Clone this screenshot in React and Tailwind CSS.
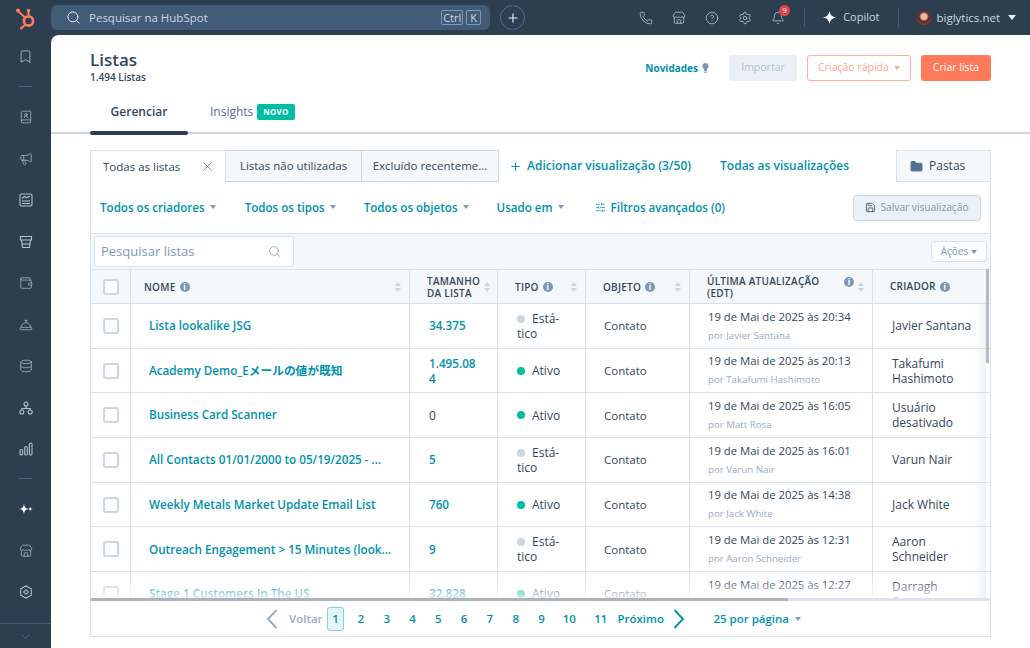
import { Bookmark, BookUser, ChevronDown, ConciergeBell, Database, Folder, Megaphone, Phone, Plus, Save, Search, Settings, SlidersHorizontal, Store, Wallet, X, Bell, CircleHelp } from 'lucide-react';

const rows = [
  { name: 'Lista lookalike JSG', size: '34.375', link: true, type: 'static', date: '19 de Mai de 2025 às 20:34', by: 'por Javier Santana', creator: 'Javier Santana' },
  { name: 'Academy Demo_Eメールの値が既知', size: '1.495.08 4', link: true, type: 'active', date: '19 de Mai de 2025 às 20:13', by: 'por Takafumi Hashimoto', creator: 'Takafumi Hashimoto' },
  { name: 'Business Card Scanner', size: '0', link: false, type: 'active', date: '19 de Mai de 2025 às 16:05', by: 'por Matt Rosa', creator: 'Usuário desativado' },
  { name: 'All Contacts 01/01/2000 to 05/19/2025 - ...', size: '5', link: true, type: 'static', date: '19 de Mai de 2025 às 16:01', by: 'por Varun Nair', creator: 'Varun Nair' },
  { name: 'Weekly Metals Market Update Email List', size: '760', link: true, type: 'active', date: '19 de Mai de 2025 às 14:38', by: 'por Jack White', creator: 'Jack White' },
  { name: 'Outreach Engagement > 15 Minutes (look...', size: '9', link: true, type: 'static', date: '19 de Mai de 2025 às 12:31', by: 'por Aaron Schneider', creator: 'Aaron Schneider' },
  { name: 'Stage 1 Customers In The US', size: '32.828', link: true, type: 'active', date: '19 de Mai de 2025 às 12:27', by: 'por Darragh Curran', creator: 'Darragh Curran' },
];

const pages = ['2', '3', '4', '5', '6', '7', '8', '9', '10', '11'];

function Caret({ className = '' }) {
  return <span className={`inline-block w-0 h-0 border-x-[3.5px] border-x-transparent border-t-[4px] border-t-current ${className}`} />;
}

function SortArrows() {
  return (
    <span className="flex flex-col gap-[2px] shrink-0">
      <span className="w-0 h-0 border-x-[3.5px] border-x-transparent border-b-[4px] border-b-[#cbd6e2]" />
      <span className="w-0 h-0 border-x-[3.5px] border-x-transparent border-t-[4px] border-t-[#cbd6e2]" />
    </span>
  );
}

function InfoDot() {
  return <span className="inline-flex w-[10px] h-[10px] rounded-full bg-[#7c98b6] text-white text-[8px] font-bold items-center justify-center leading-none shrink-0">i</span>;
}

function HubLogo() {
  return (
    <svg width="22" height="24" viewBox="0 0 22 24" fill="none" stroke="#ff7a59">
      <circle cx="13.5" cy="15" r="4.6" strokeWidth="2.6" />
      <path d="M13.5 10V5.5" strokeWidth="2" />
      <circle cx="13.5" cy="4.5" r="1.7" fill="#ff7a59" stroke="none" />
      <path d="M10 11.5 3.5 5.5" strokeWidth="2" />
      <circle cx="3" cy="4.5" r="2" fill="#ff7a59" stroke="none" />
      <path d="M10.2 18.6 7 21.8" strokeWidth="2" />
      <circle cx="6.4" cy="22" r="1.5" fill="#ff7a59" stroke="none" />
    </svg>
  );
}

function ContentIcon() {
  return (
    <svg width="14" height="14" viewBox="0 0 14 14" fill="none" stroke="#b0c1d4" strokeWidth="1.1">
      <rect x="1" y="1" width="12" height="12" rx="1.5" />
      <path d="M3 5.5 5.5 3.5 7.5 4.8 11 3" />
      <path d="M3 8h8M3 10.5h8" />
    </svg>
  );
}

function CommerceIcon() {
  return (
    <svg width="14" height="14" viewBox="0 0 14 14" fill="none" stroke="#b0c1d4" strokeWidth="1.1">
      <path d="M1.5 1.5h11v3.5h-11z" />
      <path d="M2.5 5 3.5 12.5h7L11.5 5" />
      <path d="M3 9h8" />
    </svg>
  );
}

function OrgIcon() {
  return (
    <svg width="14" height="14" viewBox="0 0 14 14" fill="none" stroke="#b0c1d4" strokeWidth="1.1">
      <circle cx="7" cy="3" r="2" />
      <circle cx="2.8" cy="11" r="2" />
      <circle cx="11.2" cy="11" r="2" />
      <path d="M7 5v2.5M2.8 9V7.5h8.4V9" />
    </svg>
  );
}

function BarsIcon() {
  return (
    <svg width="14" height="14" viewBox="0 0 14 14" fill="none" stroke="#b0c1d4" strokeWidth="1.1">
      <rect x="1" y="7.5" width="2.6" height="5.5" rx="1.3" />
      <rect x="5.7" y="4.5" width="2.6" height="8.5" rx="1.3" />
      <rect x="10.4" y="1" width="2.6" height="12" rx="1.3" />
    </svg>
  );
}

function HexIcon() {
  return (
    <svg width="14" height="14" viewBox="0 0 14 15" fill="none" stroke="#b0c1d4" strokeWidth="1.1">
      <path d="M7 1 12.6 4.2v6.6L7 14 1.4 10.8V4.2z" />
      <path d="M7 5 9.5 7.5 7 10 4.5 7.5z" />
    </svg>
  );
}

function Sparkle({ size = 12 }) {
  return (
    <svg width={size} height={size} viewBox="0 0 12 12" fill="#fff">
      <path d="M6 0C6.5 3.6 8.4 5.5 12 6 8.4 6.5 6.5 8.4 6 12 5.5 8.4 3.6 6.5 0 6 3.6 5.5 5.5 3.6 6 0Z" />
    </svg>
  );
}

function BreezeIcon() {
  return (
    <svg width="14" height="14" viewBox="0 0 14 14" fill="#fff">
      <path d="M5 1C5.4 5 6 6.5 10 7 6 7.5 5.4 9 5 13 4.6 9 4 7.5 0 7 4 6.5 4.6 5 5 1Z" />
      <path d="M11.2 4.8C11.4 6 12 6.7 14 7 12 7.3 11.4 8 11.2 9.2 11 8 10.4 7.3 9 7 10.4 6.7 11 6 11.2 4.8Z" />
    </svg>
  );
}

function Chevron({ dir, className }) {
  return (
    <svg width="12" height="20" viewBox="0 0 12 20" fill="none" stroke="currentColor" strokeWidth="1.9" className={className}>
      <path d={dir === 'left' ? 'M10.5 1 2 10l8.5 9' : 'M1.5 1 10 10l-8.5 9'} />
    </svg>
  );
}

function Sidebar() {
  const cls = 'text-[#b0c1d4]';
  return (
    <aside className="w-[51px] shrink-0 flex flex-col items-center relative">
      <Bookmark size={15} strokeWidth={1.3} className={`${cls} mt-[14px]`} />
      <div className="w-[13px] h-px bg-[#4f6a87] mt-[22px]" />
      <div className="flex flex-col items-center gap-[27.5px] mt-[23px]">
        <BookUser size={14} strokeWidth={1.2} className={cls} />
        <Megaphone size={14} strokeWidth={1.2} className={cls} />
        <ContentIcon />
        <CommerceIcon />
        <Wallet size={14} strokeWidth={1.2} className={cls} />
        <ConciergeBell size={14} strokeWidth={1.2} className={cls} />
        <Database size={14} strokeWidth={1.2} className={cls} />
        <OrgIcon />
        <BarsIcon />
      </div>
      <div className="w-[13px] h-px bg-[#4f6a87] mt-[22px]" />
      <div className="flex flex-col items-center gap-[27.5px] mt-[23px]">
        <BreezeIcon />
        <Store size={14} strokeWidth={1.2} className={cls} />
        <HexIcon />
      </div>
      <div className="absolute left-0 right-0 top-[588px] h-[25px] border-t border-[#425b76] flex items-center justify-center">
        <ChevronDown size={15} strokeWidth={1.4} className="text-[#516f90]" />
      </div>
    </aside>
  );
}

function TopBar() {
  return (
    <header className="h-[35px] bg-[#2d3e50] flex items-center shrink-0 relative">
      <div className="w-[51px] flex justify-center"><HubLogo /></div>
      <div className="w-[439px] h-[25px] rounded-md bg-[#425b76] flex items-center pl-[15px] pr-[9px] text-[#cbd6e2]">
        <Search size={15} strokeWidth={1.6} className="text-[#eaf0f6]" />
        <span className="ml-[8px] text-[11.5px]">Pesquisar na HubSpot</span>
        <span className="ml-auto flex gap-[3px] text-[11px] leading-none">
          <span className="border border-[#7c98b6] rounded-[2px] px-[1px] py-px">Ctrl</span>
          <span className="border border-[#7c98b6] rounded-[2px] px-[3px] py-px">K</span>
        </span>
      </div>
      <div className="ml-[10px] w-[25px] h-[25px] rounded-full border border-[#516f90] flex items-center justify-center text-[#eaf0f6]">
        <Plus size={14} />
      </div>
      <div className="ml-auto flex items-center text-[#cbd6e2]">
        <div className="flex items-center gap-[19px] mr-[19px]">
          <Phone size={14} strokeWidth={1.2} />
          <Store size={14} strokeWidth={1.2} />
          <CircleHelp size={14} strokeWidth={1.2} />
          <Settings size={14} strokeWidth={1.2} />
          <div className="relative">
            <Bell size={14} strokeWidth={1.2} />
            <span className="absolute -top-[6px] -right-[5px] w-[11px] h-[11px] rounded-full bg-[#e0434b] text-white text-[8px] flex items-center justify-center">9</span>
          </div>
        </div>
        <div className="w-px h-[19px] bg-[#425b76]" />
        <div className="flex items-center gap-[7px] pl-[18px] pr-[18px] text-[11px]"><Sparkle size={13} /><span>Copilot</span></div>
        <div className="w-px h-[19px] bg-[#425b76]" />
        <div className="flex items-center pl-[18px] pr-[14px] text-[11.5px]">
          <span className="w-[14px] h-[14px] rounded-full bg-[radial-gradient(circle_at_50%_40%,#f0b9a0_0_25%,#5a2a20_45%,#c0492f_100%)] mr-[6px]" />
          <span>biglytics.net</span>
          <Caret className="ml-[8px] text-[#eaf0f6] border-x-[4px] border-t-[5px]" />
        </div>
      </div>
    </header>
  );
}

function Row({ r }) {
  return (
    <div className="flex h-[44.7px] border-b border-[#d9e2ec] text-[12px] text-[#33475b]">
      <div className="w-[40px] border-r border-[#d9e2ec] flex items-center justify-center">
        <span className="w-[16px] h-[16px] rounded-[3px] border-2 border-[#cbd6e2] bg-white" />
      </div>
      <div className="w-[279px] border-r border-[#d9e2ec] flex items-center pl-[18px] text-[11.7px] font-semibold text-[#0091ae] whitespace-nowrap">{r.name}</div>
      <div className={`w-[88px] border-r border-[#d9e2ec] flex items-center pl-[19px] pr-[6px] leading-[15px] ${r.link ? 'text-[11.7px] font-semibold text-[#0091ae]' : ''}`}>
        <span className="max-w-[52px]">{r.size}</span>
      </div>
      <div className="w-[88px] border-r border-[#d9e2ec] flex items-center pl-[19px] leading-[15px]">
        {r.type === 'active' ? (
          <span className="flex items-center gap-[7px]"><span className="w-[8px] h-[8px] rounded-full bg-[#00bda5]" />Ativo</span>
        ) : (
          <span><span className="inline-block w-[8px] h-[8px] rounded-full bg-[#cbd6e2] mr-[7px]" />Está-<br />tico</span>
        )}
      </div>
      <div className="w-[104px] border-r border-[#d9e2ec] flex items-center pl-[18px] text-[11.5px]">Contato</div>
      <div className="w-[183px] border-r border-[#d9e2ec] flex flex-col justify-center pl-[18px] gap-[3px]">
        <span className="text-[11.3px] whitespace-nowrap">{r.date}</span>
        <span className="text-[9.7px] text-[#99acc2]">{r.by}</span>
      </div>
      <div className="flex-1 flex items-center pl-[19px] leading-[15px]"><span className="max-w-[84px]">{r.creator}</span></div>
    </div>
  );
}

function HeaderCell({ className, children, autoSort = true }) {
  return (
    <div className={`border-r border-[#d9e2ec] flex items-center gap-[4px] pl-[13px] pr-[8px] text-[10px] font-semibold tracking-wide leading-[12px] text-[#33475b] ${className}`}>
      {children}
      <span className={autoSort ? 'ml-auto' : ''}><SortArrows /></span>
    </div>
  );
}

function ListsTable() {
  return (
    <div className="relative h-[332px] overflow-hidden">
      <div className="flex h-[35px] bg-[#f5f8fa] border-y border-[#d9e2ec]">
        <div className="w-[40px] border-r border-[#d9e2ec] flex items-center justify-center">
          <span className="w-[16px] h-[16px] rounded-[3px] border-2 border-[#cbd6e2] bg-white" />
        </div>
        <HeaderCell className="w-[279px]">NOME <InfoDot /></HeaderCell>
        <HeaderCell className="w-[88px] pl-[17px]"><span>TAMANHO<br />DA LISTA</span></HeaderCell>
        <HeaderCell className="w-[88px] pl-[17px]">TIPO <InfoDot /></HeaderCell>
        <HeaderCell className="w-[104px] pl-[17px]">OBJETO <InfoDot /></HeaderCell>
        <HeaderCell className="w-[183px] pl-[17px]" autoSort={false}><span>ÚLTIMA ATUALIZAÇÃO<br />(EDT)</span><span className="ml-auto self-start mt-[5px]"><InfoDot /></span></HeaderCell>
        <div className="flex-1 flex items-center gap-[4px] pl-[17px] text-[10px] font-semibold tracking-wide">CRIADOR <InfoDot /></div>
      </div>
      {rows.map((r) => <Row key={r.name} r={r} />)}
      <div className="absolute left-0 right-0 bottom-[3px] h-[20px] bg-gradient-to-b from-white/0 to-white/80" />
      <div className="absolute right-[4px] top-[35px] bottom-[3px] w-[12px] bg-gradient-to-r from-white/0 to-[#dfe3eb]/50" />
      <div className="absolute right-[1px] top-0 w-[3px] h-[94px] bg-[#b5bcc4]" />
      <div className="absolute left-0 right-0 bottom-0 h-[3px] bg-[#dfe3eb]">
        <div className="w-[697px] h-full bg-[#aeb4ba]" />
      </div>
    </div>
  );
}

export default function App() {
  return (
    <div className="w-[1030px] h-[648px] overflow-hidden bg-[#2d3e50] flex flex-col font-['Open_Sans','Noto_Sans_CJK_JP',sans-serif] text-[#33475b]">
      <TopBar />
      <div className="flex flex-1 min-h-0">
        <Sidebar />
        <main className="flex-1 bg-white rounded-tl-lg min-w-0 flex flex-col">
          <div className="flex items-start pl-[39px] pr-[39px] pt-[15px] h-[63px]">
            <div>
              <h1 className="text-[17px] font-semibold leading-[20px]">Listas</h1>
              <p className="text-[10px] font-semibold leading-[14px]">1.494 Listas</p>
            </div>
            <div className="ml-auto flex items-center mt-[5px]">
              <span className="text-[10px] font-bold text-[#0091ae]">Novidades</span>
              <svg width="7" height="10" viewBox="0 0 7 10" className="ml-[4px]" fill="#7c98b6"><path d="M3.5 0a3.2 3.2 0 0 0-2 5.6L2.3 8h2.4l.8-2.4A3.2 3.2 0 0 0 3.5 0ZM2.5 8.6h2V10h-2z" /></svg>
              <button className="ml-[20px] w-[68px] h-[26px] rounded-[3px] bg-[#eaf0f6] text-[10.5px] text-[#b0c1d4]">Importar</button>
              <button className="ml-[10px] w-[104px] h-[26px] rounded-[3px] border border-[#ff7a59]/60 text-[10.5px] text-[#ffa78f] flex items-center justify-center gap-[5px]">Criação rápida <Caret className="border-x-[2.5px] border-t-[3px]" /></button>
              <button className="ml-[10px] w-[70px] h-[26px] rounded-[3px] bg-[#ff7a59] text-[10.5px] text-white">Criar lista</button>
            </div>
          </div>

          <div className="mx-[39px] h-[34px] pb-[6px] flex items-center relative">
            <div className="w-[98px] flex items-center justify-center text-[12px] font-semibold">Gerenciar</div>
            <div className="ml-[22px] flex items-center text-[12px] text-[#516f90]">
              Insights
              <span className="ml-[4px] h-[16px] px-[6px] rounded-[2px] bg-[#00bda5] text-white text-[8px] font-bold flex items-center tracking-wide">NOVO</span>
            </div>
          </div>
          <div className="h-[2px] bg-[#cbd6e2] relative ml-0">
            <div className="absolute left-[39px] top-[-1px] w-[98px] h-[4px] rounded-sm bg-[#2d3e50]" />
          </div>

          <div className="mx-[39px] mt-[16px] flex flex-col">
            <div className="flex h-[32px] items-stretch relative">
              <div className="w-[136px] bg-white border border-b-0 border-[#d9e2ec] flex items-center justify-between pl-[12px] pr-[10px] text-[11.5px]">
                Todas as listas <X size={15} strokeWidth={1.2} className="text-[#516f90]" />
              </div>
              <div className="w-[136px] bg-[#f5f8fa] border border-l-0 border-[#cbd6e2] flex items-center justify-center text-[11.5px]">Listas não utilizadas</div>
              <div className="w-[137px] bg-[#f5f8fa] border border-l-0 border-[#cbd6e2] flex items-center justify-center text-[11.5px]">Excluído recenteme...</div>
              <div className="flex items-center pl-[10px] text-[12px] font-semibold text-[#0091ae]">
                <Plus size={13} strokeWidth={1.8} className="mr-[5px]" />Adicionar visualização (3/50)
              </div>
              <div className="flex items-center ml-[29px] text-[12px] font-semibold text-[#0091ae]">Todas as visualizações</div>
              <div className="ml-auto w-[95px] bg-[#f5f8fa] border border-[#d9e2ec] flex items-center pl-[13px] gap-[6px] text-[12px]">
                <Folder size={13} fill="#516f90" stroke="#516f90" />Pastas
              </div>
            </div>

            <div className="border-x border-b border-[#d9e2ec] h-[52px] flex items-center pl-[9px] pr-[9px] text-[11.6px] font-semibold text-[#0091ae]">
              <span className="flex items-center gap-[5px]">Todos os criadores <Caret className="text-[#7c98b6]" /></span>
              <span className="flex items-center gap-[5px] ml-[29px]">Todos os tipos <Caret className="text-[#7c98b6]" /></span>
              <span className="flex items-center gap-[5px] ml-[28px]">Todos os objetos <Caret className="text-[#7c98b6]" /></span>
              <span className="flex items-center gap-[5px] ml-[28px]">Usado em <Caret className="text-[#7c98b6]" /></span>
              <span className="flex items-center gap-[5px] ml-[31px]"><SlidersHorizontal size={11} strokeWidth={1.5} />Filtros avançados (0)</span>
              <button className="ml-auto w-[128px] h-[26px] rounded-[3px] bg-[#eaf0f6] border border-[#cbd6e2] flex items-center justify-center gap-[4px] text-[10.2px] font-normal text-[#7c98b6]">
                <Save size={11} className="text-[#425b76]" />Salvar visualização
              </button>
            </div>

            <div className="border-x border-[#d9e2ec] bg-[#f5f8fa] h-[35px] flex items-center pl-[3px] pr-[3px]">
              <div className="w-[200px] h-[31px] bg-white border border-[#d9e2ec] rounded-[3px] flex items-center justify-between pl-[6px] pr-[12px] text-[13px] text-[#7c98b6]">
                Pesquisar listas <Search size={13} strokeWidth={1.4} className="text-[#7c98b6]" />
              </div>
              <button className="ml-auto w-[56px] h-[21px] bg-white border border-[#d9e2ec] rounded-[3px] flex items-center justify-center gap-[3px] text-[10px] text-[#7c98b6]">Ações <Caret className="border-x-[2.5px] border-t-[3px]" /></button>
            </div>

            <div className="border-x border-[#d9e2ec]">
              <ListsTable />
            </div>

            <div className="border border-t-0 border-[#d9e2ec] h-[36px] flex items-center text-[11.5px] font-semibold text-[#0091ae] pl-[175px]">
              <Chevron dir="left" className="text-[#99acc2]" />
              <span className="ml-[11px] w-[33px] text-[#99acc2]">Voltar</span>
              <span className="ml-[5px] w-[17px] h-[24px] rounded-[3px] border border-[#7fd1de] bg-[#e5f5f8] flex items-center justify-center">1</span>
              <div className="flex ml-[4px]">
                {pages.map((p) => <span key={p} className="w-[25.8px] text-center [&:nth-child(9)]:w-[30px] [&:nth-child(10)]:w-[33px]">{p}</span>)}
              </div>
              <span className="w-[46px] whitespace-nowrap">Próximo</span>
              <Chevron dir="right" className="ml-[10px]" />
              <span className="ml-[28px] flex items-center gap-[6px] whitespace-nowrap">25 por página <Caret className="text-[#7c98b6]" /></span>
            </div>
          </div>
        </main>
      </div>
    </div>
  );
}
